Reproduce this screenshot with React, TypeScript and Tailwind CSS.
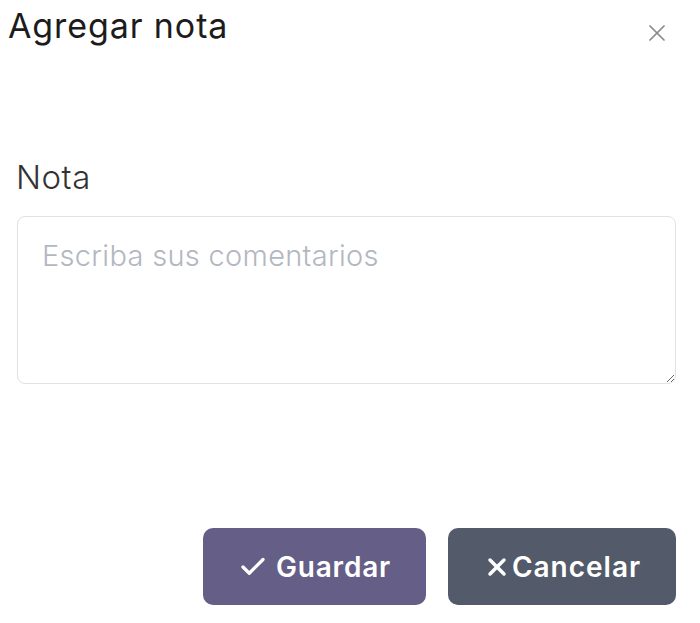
import React from 'react';
import { Check, X } from 'lucide-react';

const font = { fontFamily: 'Inter, "Noto Sans", sans-serif' };

export default function App() {
  return (
    <div className="w-[700px] h-[623px] bg-white text-[#222]" style={font}>
      {/* Header */}
      <div className="flex items-start justify-between pl-2 pr-[29px] pt-[4px]">
        <h2 className="text-[34px] leading-[44px] font-normal tracking-[0.9px] text-[#1c1c1c]">Agregar nota</h2>
        <button className="mt-[15px] text-[#8a8a8a]">
          <X size={28} strokeWidth={1.5} />
        </button>
      </div>

      {/* Body */}
      <div className="pl-[17px] pr-[24px] pt-[110px]">
        <label className="block -ml-px text-[33px] leading-[38px] font-light tracking-[0.5px] text-[#333]">Nota</label>
        <textarea
          className="mt-[20px] block w-full h-[168px] rounded-[8px] border border-[#dfe2e6] px-[24px] pt-[22px] text-[29px] leading-[34px] font-light tracking-[0.3px] text-[#333] placeholder:text-[#b3b7bf] outline-none"
          placeholder="Escriba sus comentarios"
        />
      </div>

      {/* Footer */}
      <div className="flex justify-end gap-[22px] pr-[24px] pt-[144px]">
        <button className="flex w-[223px] h-[77px] items-center justify-center gap-[8px] rounded-[10px] bg-[#655e86] text-white text-[28px] font-semibold tracking-[0.8px]">
          <Check size={30} strokeWidth={2.6} />
          Guardar
        </button>
        <button className="flex w-[228px] h-[77px] items-center justify-center gap-[1px] rounded-[10px] bg-[#535a69] text-white text-[28px] font-semibold tracking-[1px]">
          <X size={28} strokeWidth={3} />
          Cancelar
        </button>
      </div>
    </div>
  );
}
